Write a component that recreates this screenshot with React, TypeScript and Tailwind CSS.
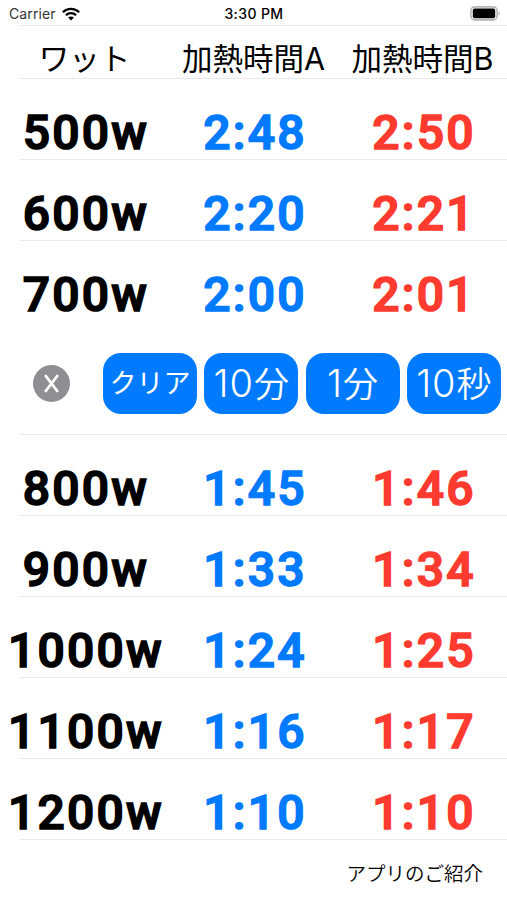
import React from 'react';

type HeatRow = {
  watt: number;
  timeA: string;
  timeB: string;
};

// ボタン行より上に表示するワット数
const upperRows: HeatRow[] = [
  { watt: 500, timeA: '2:48', timeB: '2:50' },
  { watt: 600, timeA: '2:20', timeB: '2:21' },
  { watt: 700, timeA: '2:00', timeB: '2:01' },
];

// ボタン行より下に表示するワット数
const lowerRows: HeatRow[] = [
  { watt: 800, timeA: '1:45', timeB: '1:46' },
  { watt: 900, timeA: '1:33', timeB: '1:34' },
  { watt: 1000, timeA: '1:24', timeB: '1:25' },
  { watt: 1100, timeA: '1:16', timeB: '1:17' },
  { watt: 1200, timeA: '1:10', timeB: '1:10' },
];

const Separator: React.FC<{ hidden?: boolean }> = ({ hidden }) => (
  <div className={hidden ? 'h-px' : 'ml-5 h-px bg-[#e8e8ea]'} />
);

const StatusBar: React.FC = () => (
  <header className="grid h-[25px] grid-cols-3 items-center pt-[2px] font-['Inter','Liberation_Sans',sans-serif] text-[13px] leading-none text-black">
    <div className="flex items-center gap-[6px] pl-[9px]">
      <span className="text-[14px] tracking-[0.1px] text-[#333]">Carrier</span>
      <svg width="18" height="14" viewBox="0 0 18 14" fill="none" stroke="#000" strokeWidth="2.3">
        <path d="M0.9 5.2C5.4 0.7 12.6 0.7 17.1 5.2" />
        <path d="M3.9 8.3C6.7 5.5 11.3 5.5 14.1 8.3" />
        <path d="M9 13.4L6.1 10.5C7.7 9 10.3 9 11.9 10.5Z" fill="#000" stroke="none" />
      </svg>
    </div>
    <span className="pt-px pl-px text-center text-[14px] font-medium tracking-[0.4px]">3:30 PM</span>
    <svg className="mr-[6px] justify-self-end" width="31" height="15" viewBox="0 0 31 15">
      <rect x="0.9" y="0.9" width="26.2" height="13" rx="3.8" fill="#fff" stroke="#b5b5b5" strokeWidth="1.6" />
      <rect x="2.8" y="2.6" width="22.4" height="9.6" rx="1.8" fill="#000" />
      <path d="M28.5 5.2C30.4 6 30.4 8.8 28.5 9.6Z" fill="#b5b5b5" />
    </svg>
  </header>
);

const TimeRow: React.FC<{ row: HeatRow; last?: boolean }> = ({ row, last }) => (
  <div>
    <div className="grid h-20 grid-cols-3 pt-[27px] text-center font-['Roboto',Arial,sans-serif] text-[48px] leading-[54px] font-medium tracking-[2.2px] whitespace-nowrap [-webkit-text-stroke:1.6px_currentColor]">
      <span className="pl-[3px] text-black">{row.watt}w</span>
      <span className="pl-[3px] text-[#007aff]">{row.timeA}</span>
      <span className="pl-[3px] text-[#ff3b30]">{row.timeB}</span>
    </div>
    <Separator hidden={last} />
  </div>
);

// amount は数字、unit は「分」「秒」などの単位
const BlueButton: React.FC<{ amount?: string; unit: string }> = ({ amount, unit }) => (
  <button className="flex h-[61px] w-[94px] items-center justify-center rounded-[18px] bg-[#007aff] font-[350] whitespace-nowrap text-white">
    {amount ? (
      <span className="text-[35px] leading-none">
        <span className="text-[38px] leading-none tracking-[1px]">{amount}</span>
        {unit}
      </span>
    ) : (
      <span className="text-[27px] leading-none font-normal">{unit}</span>
    )}
  </button>
);

const App: React.FC = () => {
  return (
    <main className="h-[900px] w-[507px] overflow-hidden bg-white font-['Inter','Noto_Sans_CJK_JP',sans-serif] text-black">
      <StatusBar />
      <Separator />

      <div className="grid h-[52px] grid-cols-3 items-center pt-[14px] text-center text-[30.5px] leading-none font-normal whitespace-nowrap">
        <span>ワット</span>
        <span>加熱時間A</span>
        <span>加熱時間B</span>
      </div>
      <Separator />

      {upperRows.map((row) => (
        <TimeRow key={row.watt} row={row} last={row.watt === 700} />
      ))}

      {/* 入力ボタン */}
      <div className="flex h-[112px] items-center pt-[10px] pl-[33px]">
        <button className="mr-[33px] flex size-[37px] items-center justify-center rounded-full bg-[#8e8e93]">
          <svg width="15" height="19" viewBox="0 0 15 19" fill="none" stroke="#fff" strokeWidth="2.8" strokeLinecap="round">
            <path d="M1.8 2L13.2 17M13.2 2L1.8 17" />
          </svg>
        </button>
        <div className="flex gap-[7.3px]">
          <BlueButton unit="クリア" />
          <BlueButton amount="10" unit="分" />
          <BlueButton amount="1" unit="分" />
          <BlueButton amount="10" unit="秒" />
        </div>
      </div>
      <Separator />

      {lowerRows.map((row) => (
        <TimeRow key={row.watt} row={row} />
      ))}

      <footer className="flex justify-end pt-[22px] pr-[24px] text-[19.5px] leading-6 font-[350]">アプリのご紹介</footer>
    </main>
  );
};

export default App;
